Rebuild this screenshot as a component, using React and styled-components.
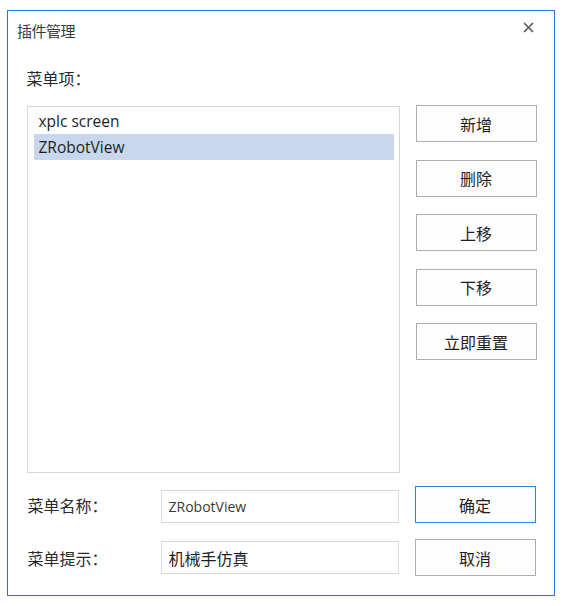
import React, { useState } from "react";
import styled, { createGlobalStyle } from "styled-components";

const GlobalStyle = createGlobalStyle`
  html, body {
    margin: 0;
    padding: 0;
    background: #ffffff;
  }
  body {
    font-family: "Noto Sans CJK SC", "Noto Sans", sans-serif;
    color: #1f1f1f;
  }
`;

const Window = styled.div`
  box-sizing: border-box;
  margin: 10px 0 0 7px;
  width: 548px;
  height: 586px;
  border: 1.5px solid #2f73d2;
  background: #ffffff;
  display: flex;
  flex-direction: column;
`;

const TitleBar = styled.div`
  height: 41px;
  display: flex;
  align-items: center;
  justify-content: space-between;
  padding: 0 19px 0 9px;
`;

const Title = styled.div`
  font-size: 15px;
  color: #3a3a3a;
  letter-spacing: -0.5px;
  margin-top: -2px;
`;

const CloseButton = styled.button`
  border: none;
  background: transparent;
  padding: 0;
  width: 14px;
  height: 14px;
  display: flex;
  align-items: center;
  justify-content: center;
  margin-top: -8px;
`;

const Body = styled.div`
  flex: 1;
  display: flex;
  flex-direction: column;
  padding: 0 17px 0 18.5px;
`;

const SectionLabel = styled.div`
  height: 54px;
  display: flex;
  align-items: center;
  font-size: 16px;
  color: #2a2a2a;
  padding-bottom: 2px;
  box-sizing: border-box;
`;

const MainRow = styled.div`
  display: flex;
  gap: 16px;
`;

const ListBox = styled.div`
  box-sizing: border-box;
  width: 373px;
  height: 367px;
  border: 1px solid #d6d6d6;
  padding: 1px 5px 0 6px;
`;

const ListItem = styled.div`
  height: 26px;
  display: flex;
  align-items: center;
  padding-left: 5px;
  font-family: "Open Sans", "Noto Sans", sans-serif;
  font-size: 15.5px;
  color: #1e1e1e;
  background: ${({ selected }) => (selected ? "#c9d7ee" : "transparent")};
  cursor: default;
`;

const ButtonColumn = styled.div`
  display: flex;
  flex-direction: column;
  gap: 17.5px;
  margin-top: -1px;
`;

const Button = styled.button`
  box-sizing: border-box;
  width: 121px;
  height: 37px;
  border: 1px solid ${({ primary }) => (primary ? "#3b7fd6" : "#adadad")};
  background: #fdfdfd;
  font-family: "Noto Sans CJK SC", sans-serif;
  font-size: 16px;
  color: #1f1f1f;
  padding: 0;
  cursor: pointer;
`;

const FormGrid = styled.div`
  display: grid;
  grid-template-columns: 118px 238px 121px;
  column-gap: 16px;
  row-gap: 16px;
  margin-top: 13px;
  align-items: center;
`;

const FieldLabel = styled.div`
  font-size: 16px;
  color: #2a2a2a;
  padding-left: 1px;
`;

const TextInput = styled.input`
  box-sizing: border-box;
  width: 238px;
  height: 33px;
  border: 1px solid #dadada;
  padding: 0 0 0 7px;
  outline: none;
  font-family: ${({ cjk }) =>
    cjk ? '"Noto Sans CJK SC", sans-serif' : '"Open Sans", "Noto Sans", sans-serif'};
  font-size: ${({ cjk }) => (cjk ? "16px" : "14px")};
  color: ${({ cjk }) => (cjk ? "#1f1f1f" : "#3a3a3a")};
  margin-top: ${({ shift }) => shift || 0}px;
`;

function CloseIcon() {
  return (
    <svg width="11" height="11" viewBox="0 0 11 11">
      <path d="M1 1 L10 10 M10 1 L1 10" stroke="#555" strokeWidth="1.6" />
    </svg>
  );
}

const items = ["xplc screen", "ZRobotView"];

export default function App() {
  const [selected, setSelected] = useState(1);
  return (
    <>
      <GlobalStyle />
      <Window>
        <TitleBar>
          <Title>插件管理</Title>
          <CloseButton>
            <CloseIcon />
          </CloseButton>
        </TitleBar>
        <Body>
          <SectionLabel>菜单项：</SectionLabel>
          <MainRow>
            <ListBox>
              {items.map((it, i) => (
                <ListItem
                  key={it}
                  selected={i === selected}
                  onClick={() => setSelected(i)}
                >
                  {it}
                </ListItem>
              ))}
            </ListBox>
            <ButtonColumn>
              <Button>新增</Button>
              <Button>删除</Button>
              <Button>上移</Button>
              <Button>下移</Button>
              <Button>立即重置</Button>
            </ButtonColumn>
          </MainRow>
          <FormGrid>
            <FieldLabel>菜单名称：</FieldLabel>
            <TextInput defaultValue="ZRobotView" shift={4} />
            <Button primary>确定</Button>
            <FieldLabel>菜单提示：</FieldLabel>
            <TextInput cjk defaultValue="机械手仿真" />
            <Button>取消</Button>
          </FormGrid>
        </Body>
      </Window>
    </>
  );
}
